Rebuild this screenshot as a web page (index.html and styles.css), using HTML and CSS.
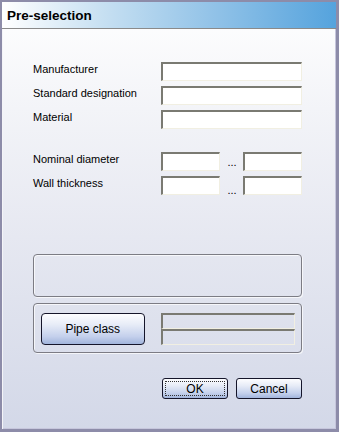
FILE: index.html
```html
<!DOCTYPE html>
<html>
<head>
<meta charset="utf-8">
<link rel="stylesheet" href="styles.css">
</head>
<body>
<div class="window">
  <div class="titlebar">Pre-selection</div>
  <div class="content">
    <div class="grid1">
      <label class="lbl">Manufacturer</label><div class="field"></div>
      <label class="lbl">Standard designation</label><div class="field"></div>
      <label class="lbl">Material</label><div class="field"></div>
    </div>
    <div class="grid2">
      <label class="lbl">Nominal diameter</label><div class="field"></div><span class="dots">...</span><div class="field"></div>
      <label class="lbl">Wall thickness</label><div class="field"></div><span class="dots low">...</span><div class="field"></div>
    </div>
    <div class="group g1"></div>
    <div class="group g2">
      <button class="btn pipe">Pipe class</button>
      <div class="ro">
        <div class="rofield"></div>
        <div class="rofield"></div>
      </div>
    </div>
    <div class="actions">
      <button class="btn small focus"><span>OK</span></button>
      <button class="btn small">Cancel</button>
    </div>
  </div>
</div>
</body>
</html>
```

FILE: styles.css
```css
html, body {
  margin: 0;
  padding: 0;
}
body {
  width: 339px;
  height: 432px;
  overflow: hidden;
  font-family: "Liberation Sans", Arial, sans-serif;
  font-size: 11px;
  color: #000;
}
.window {
  box-sizing: border-box;
  width: 339px;
  height: 432px;
  border-style: solid;
  border-color: #8d8ca9;
  border-width: 2px 3px 3px 2px;
  background: linear-gradient(#ffffff 0%, #f3f4f8 25%, #e6e8f1 55%, #d3d8e8 100%);
  box-shadow: inset 1px 0 0 #f4f4f8, inset -1px 0 0 #c6c6dc, inset 0 -1px 0 #c6c6dc;
  display: flex;
  flex-direction: column;
}
.titlebar {
  height: 26px;
  line-height: 27px;
  border-bottom: 1px solid #8a8a8a;
  background: linear-gradient(to right, #ffffff 0%, #c7e0f2 30%, #8fc1e7 65%, #55a3dd 100%);
  font-weight: bold;
  font-size: 13.5px;
  padding-left: 5px;
}
.content {
  padding: 33px 34px 0 31px;
  display: flex;
  flex-direction: column;
}
.grid1 {
  display: grid;
  grid-template-columns: 128px 141px;
  grid-auto-rows: 19px;
  row-gap: 5px;
}
.grid2 {
  margin-top: 23px;
  display: grid;
  grid-template-columns: 128px 59px 23px 59px;
  grid-auto-rows: 19px;
  row-gap: 5px;
}
.lbl {
  line-height: 13px;
  margin-top: 1px;
  white-space: nowrap;
}
.field {
  box-sizing: border-box;
  background: #fff;
  border-top: 2px solid #7a7a72;
  border-left: 2px solid #7a7a72;
  border-right: 1px solid #f1efe2;
  border-bottom: 1px solid #f1efe2;
}
.dots {
  text-align: center;
  line-height: 13px;
  padding-top: 4px;
  padding-left: 1px;
}
.dots.low {
  padding-top: 8px;
}
.group {
  box-sizing: border-box;
  border: 1px solid #7c7c84;
  border-radius: 4px;
  box-shadow: inset 1px 1px 0 rgba(255,255,255,0.7), 1px 1px 0 rgba(255,255,255,0.7);
}
.g1 {
  margin-top: 59px;
  height: 43px;
}
.g2 {
  margin-top: 6px;
  height: 50px;
  display: flex;
  align-items: flex-start;
  padding: 9px 6px 0 7px;
}
.btn {
  box-sizing: border-box;
  font-family: "Liberation Sans", Arial, sans-serif;
  font-size: 11px;
  color: #000;
  border: 1px solid #15152a;
  border-radius: 4px;
  background: linear-gradient(#fdfdff 0%, #e7ecf7 35%, #c4d0ec 75%, #a2b5dc 100%);
  padding: 0;
  margin: 0;
}
.pipe {
  width: 104px;
  height: 32px;
  font-size: 12px;
}
.ro {
  margin-left: 16px;
  width: 135px;
  display: flex;
  flex-direction: column;
}
.rofield {
  box-sizing: border-box;
  height: 16px;
  border-top: 2px solid #7a7a72;
  border-left: 2px solid #7a7a72;
  border-right: 1px solid #f1efe2;
  border-bottom: 1px solid #f1efe2;
}
.actions {
  margin-top: 25px;
  display: flex;
  justify-content: flex-end;
  gap: 8px;
}
.small {
  width: 66px;
  height: 21px;
  border-radius: 3px;
  font-size: 12px;
}
.focus {
  position: relative;
}
.focus span {
  display: block;
}
.focus::after {
  content: "";
  position: absolute;
  left: 2px;
  top: 2px;
  right: 2px;
  bottom: 2px;
  border: 1px dotted #333;
}
```
